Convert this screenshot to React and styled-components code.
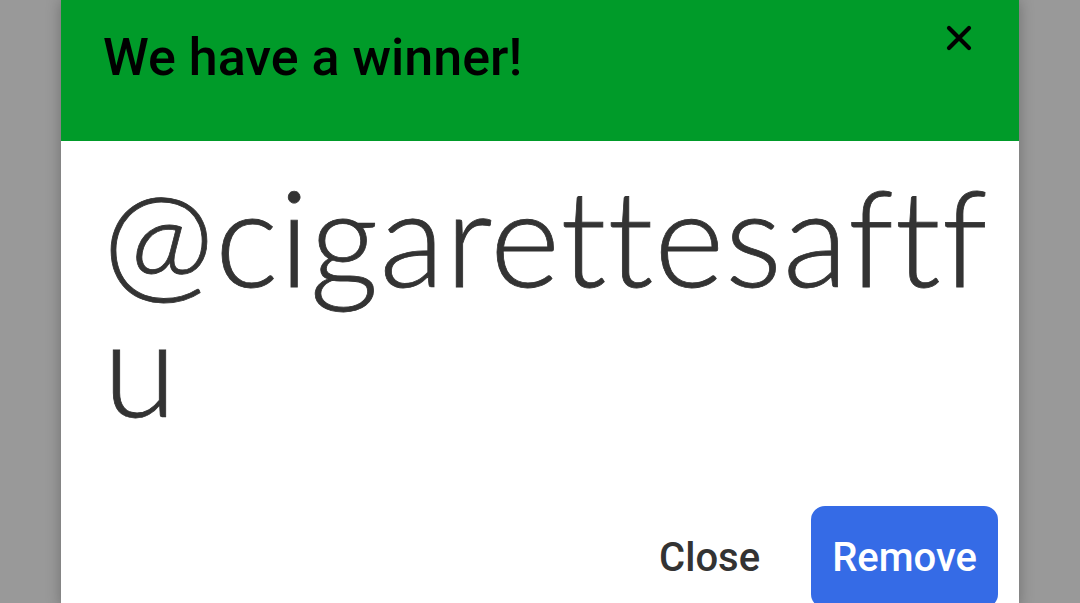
import React from "react";
import styled, { createGlobalStyle } from "styled-components";

const GlobalStyle = createGlobalStyle`
  html, body {
    margin: 0;
    padding: 0;
    height: 100%;
    overflow: hidden;
    background: #999999;
  }
  #root {
    height: 100%;
  }
`;

const Backdrop = styled.div`
  display: flex;
  justify-content: center;
  height: 100%;
  padding: 0 61px;
  box-sizing: border-box;
`;

const Dialog = styled.div`
  display: flex;
  flex-direction: column;
  width: 100%;
  align-self: flex-start;
  background: #ffffff;
  box-shadow: 0 0 14px rgba(0, 0, 0, 0.28);
`;

const Header = styled.div`
  display: flex;
  align-items: flex-start;
  justify-content: space-between;
  height: 141px;
  box-sizing: border-box;
  padding: 24px 36px 0 42px;
  background: #009b29;
`;

const Title = styled.h2`
  margin: 0;
  font-family: Roboto, "Liberation Sans", sans-serif;
  font-weight: 500;
  font-size: 52px;
  line-height: 68px;
  color: #000000;
`;

const CloseIcon = styled.button`
  display: flex;
  align-items: center;
  justify-content: center;
  width: 48px;
  height: 48px;
  margin-top: -10px;
  padding: 0;
  border: none;
  background: transparent;
  cursor: pointer;
`;

const Body = styled.div`
  padding: 30px 30px 0 42px;
`;

const Handle = styled.p`
  margin: 0;
  font-family: Lato, "Noto Sans", sans-serif;
  font-weight: 300;
  font-size: 134px;
  line-height: 130px;
  letter-spacing: 1px;
  color: #333333;
  word-break: break-all;
  -webkit-text-stroke: 0.8px #333333;
`;

const Footer = styled.div`
  display: flex;
  justify-content: flex-end;
  align-items: center;
  gap: 30px;
  padding: 75px 21px 0 0;
`;

const Button = styled.button`
  height: 102px;
  padding: 0 21px;
  border: none;
  border-radius: 14px;
  font-family: Roboto, "Liberation Sans", sans-serif;
  font-weight: 500;
  font-size: 40px;
  background: ${({ primary }) => (primary ? "#356be6" : "transparent")};
  color: ${({ primary }) => (primary ? "#ffffff" : "#333333")};
  cursor: pointer;
`;

export default function App() {
  return (
    <>
      <GlobalStyle />
      <Backdrop>
        <Dialog>
          <Header>
            <Title>We have a winner!</Title>
            <CloseIcon aria-label="close">
              <svg width="26" height="26" viewBox="0 0 26 26">
                <path
                  d="M3 3 L23 23 M23 3 L3 23"
                  stroke="#000"
                  strokeWidth="4.2"
                  strokeLinecap="round"
                />
              </svg>
            </CloseIcon>
          </Header>
          <Body>
            <Handle>@cigarettesaftfu</Handle>
          </Body>
          <Footer>
            <Button>Close</Button>
            <Button primary>Remove</Button>
          </Footer>
        </Dialog>
      </Backdrop>
    </>
  );
}
